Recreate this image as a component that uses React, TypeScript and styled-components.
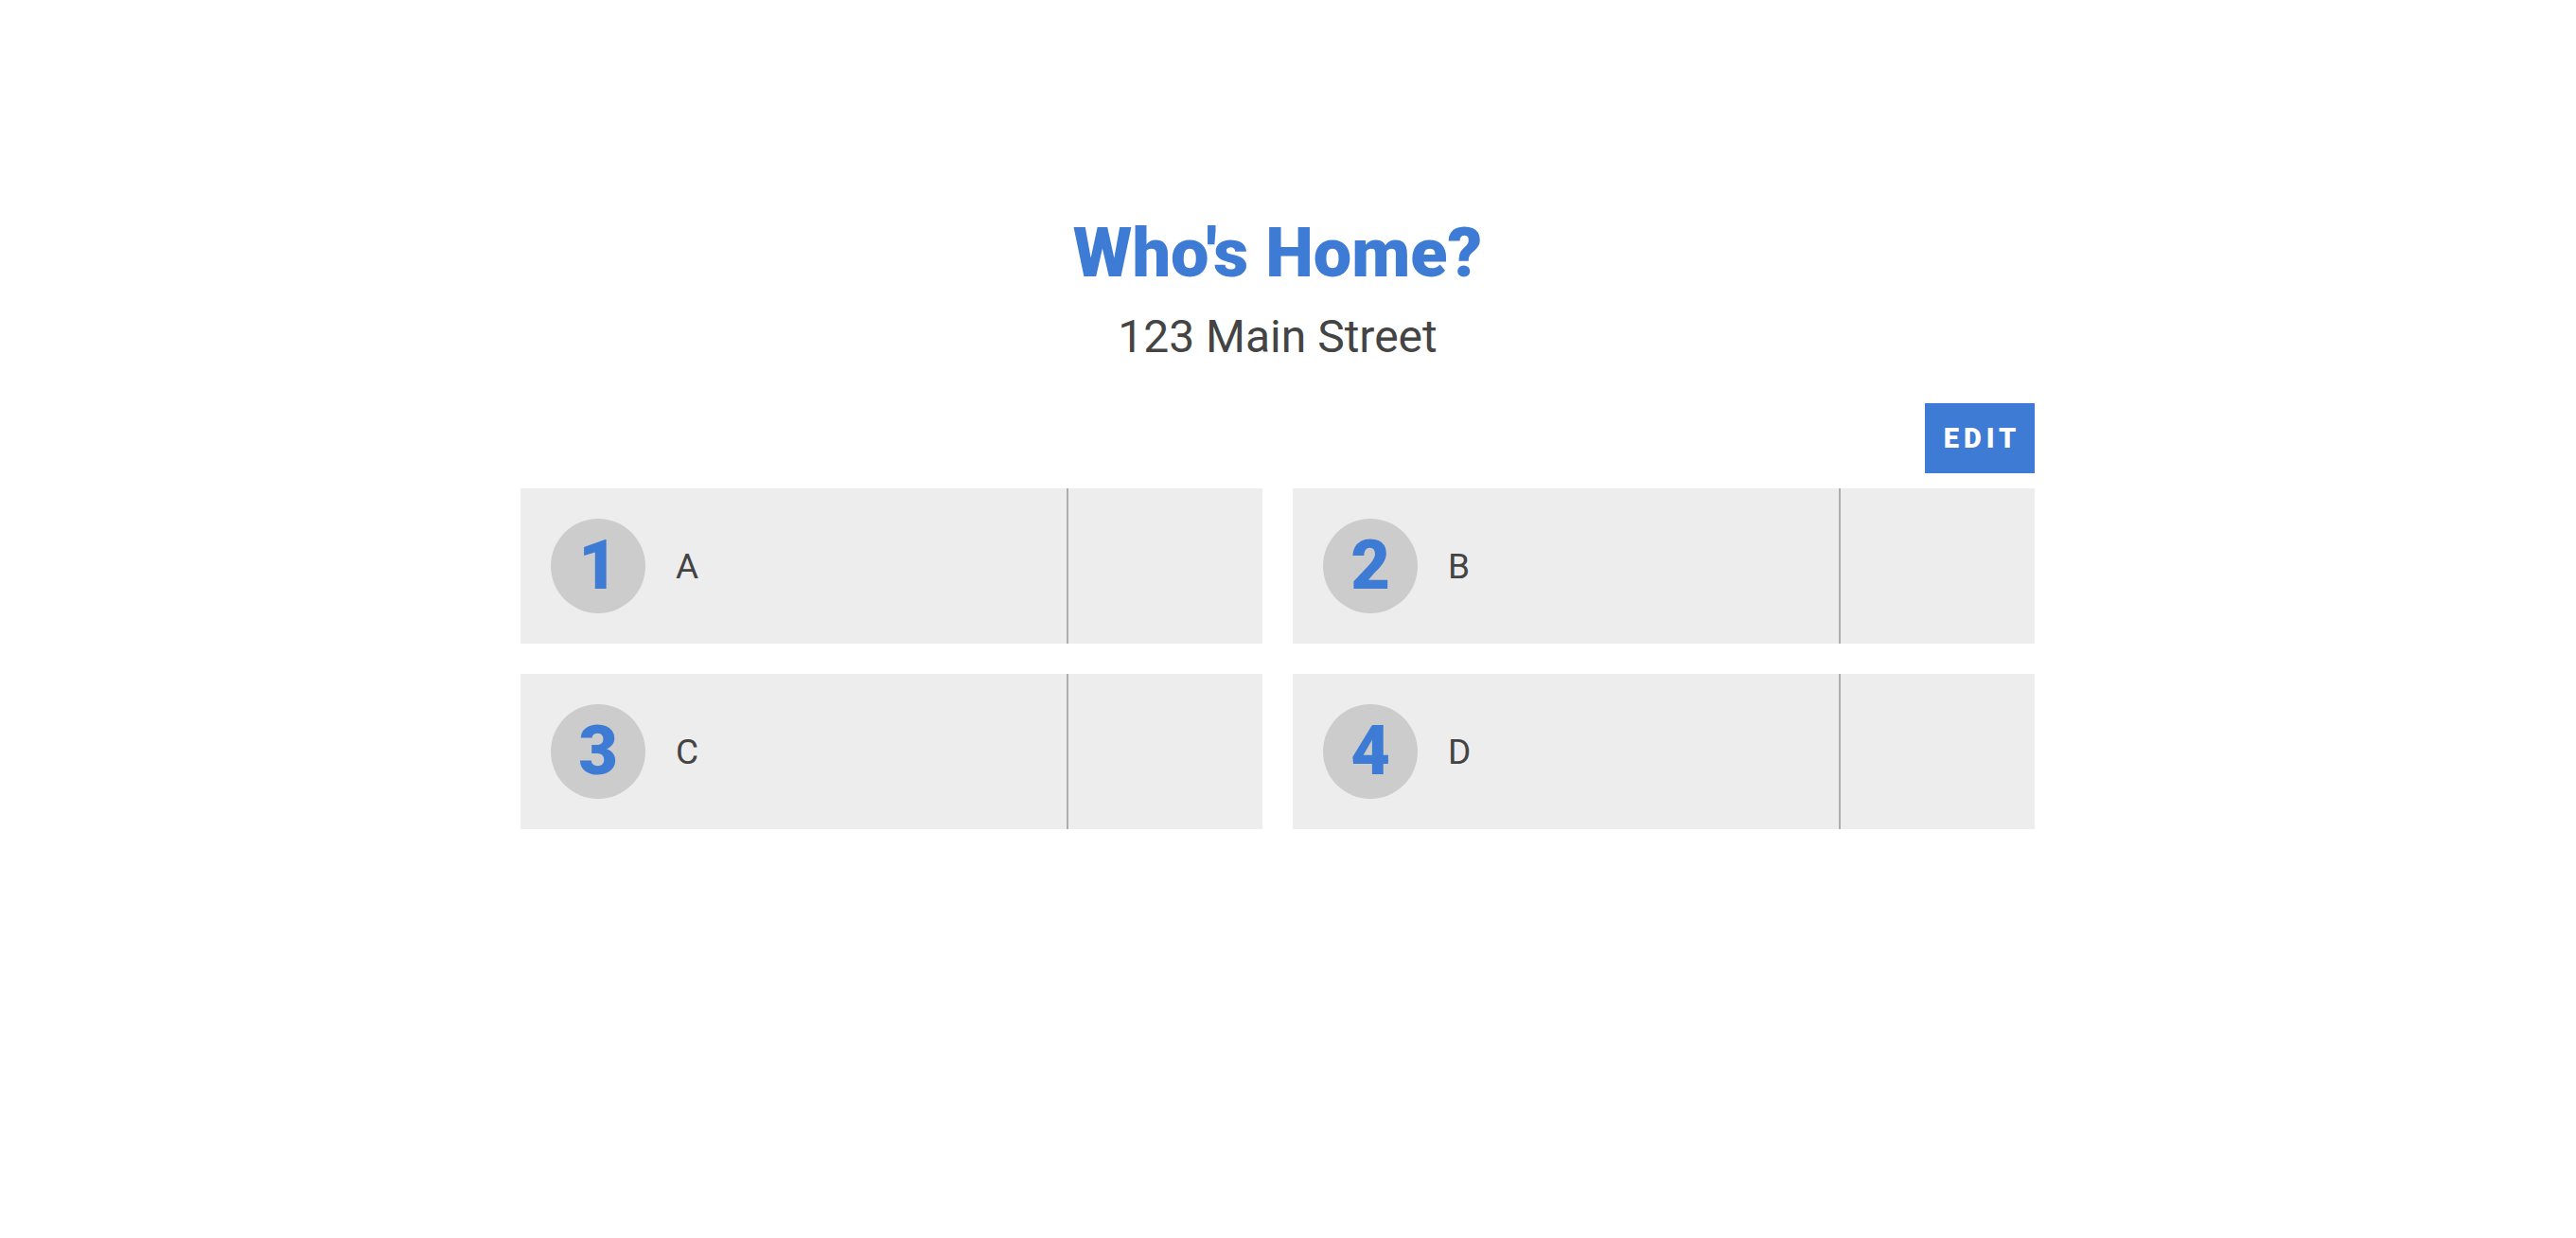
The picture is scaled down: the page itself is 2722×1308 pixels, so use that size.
import React from "react";
import styled, { createGlobalStyle } from "styled-components";

const GlobalStyle = createGlobalStyle`
  html, body {
    margin: 0;
    padding: 0;
    background: #ffffff;
    font-family: Roboto, "Noto Sans", Arial, sans-serif;
  }
`;

const Page = styled.div`
  width: 2700px;
  display: flex;
  flex-direction: column;
  align-items: center;
  padding-top: 223px;
`;

const Title = styled.h1`
  margin: 0;
  font-size: 72px;
  line-height: 90px;
  font-weight: 900;
  color: #3e7bd5;
`;

const Subtitle = styled.h2`
  margin: 0;
  margin-top: 13px;
  font-size: 48px;
  line-height: 60px;
  font-weight: 400;
  color: #444444;
`;

const Content = styled.div`
  width: 1600px;
  margin-top: 40px;
  display: flex;
  flex-direction: column;
`;

const Toolbar = styled.div`
  display: flex;
  justify-content: flex-end;
  margin-bottom: 16px;
`;

const EditButton = styled.button`
  width: 116px;
  height: 74px;
  border: none;
  background: #3e7bd5;
  color: #ffffff;
  font-family: Roboto, Arial, sans-serif;
  font-weight: 900;
  font-size: 29px;
  letter-spacing: 5px;
  padding: 0 0 0 5px;
  cursor: pointer;
`;

const Grid = styled.div`
  display: grid;
  grid-template-columns: 1fr 1fr;
  gap: 32px;
`;

const Card = styled.div`
  height: 164px;
  background: #ededed;
  display: flex;
`;

const Main = styled.div`
  width: 579px;
  display: flex;
  align-items: center;
  padding-left: 32px;
  gap: 32px;
  box-sizing: border-box;
  border-right: 2px solid #adadad;
`;

const Badge = styled.div`
  width: 100px;
  height: 100px;
  border-radius: 50%;
  background: #cccccc;
  display: flex;
  align-items: center;
  justify-content: center;
  color: #3e7bd5;
  font-size: 72px;
  font-weight: 900;
  line-height: 1;
`;

const Label = styled.span`
  font-size: 37px;
  color: #444444;
`;

const Side = styled.div`
  flex: 1;
`;

const people = [
  { n: 1, name: "A" },
  { n: 2, name: "B" },
  { n: 3, name: "C" },
  { n: 4, name: "D" },
];

export default function App() {
  return (
    <>
      <GlobalStyle />
      <Page>
        <Title>Who's Home?</Title>
        <Subtitle>123 Main Street</Subtitle>
        <Content>
          <Toolbar>
            <EditButton>EDIT</EditButton>
          </Toolbar>
          <Grid>
            {people.map((p) => (
              <Card key={p.n}>
                <Main>
                  <Badge>{p.n}</Badge>
                  <Label>{p.name}</Label>
                </Main>
                <Side />
              </Card>
            ))}
          </Grid>
        </Content>
      </Page>
    </>
  );
}
